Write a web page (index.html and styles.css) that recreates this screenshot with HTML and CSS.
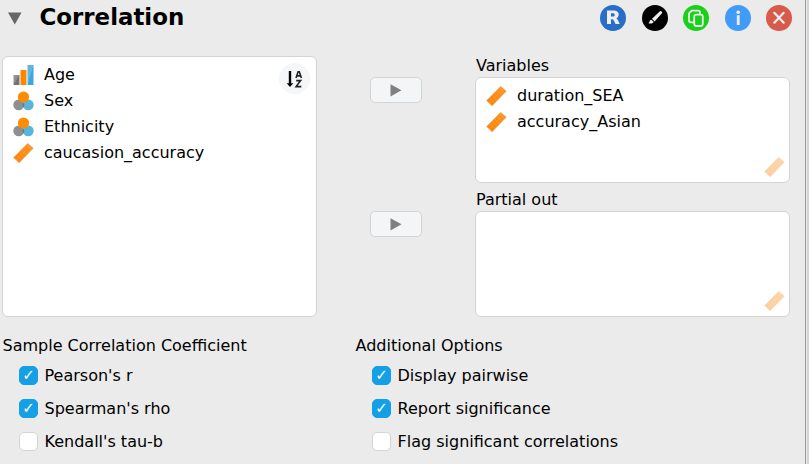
FILE: index.html
```html
<!DOCTYPE html>
<html lang="en">
<head>
<meta charset="utf-8">
<title>Correlation</title>
<link rel="stylesheet" href="styles.css">
</head>
<body>
<svg class="defs" width="0" height="0">
  <defs>
    <linearGradient id="or" x1="0" y1="1" x2="1" y2="0"><stop offset="0" stop-color="#ff7f00"/><stop offset="1" stop-color="#ff9220"/></linearGradient>
    <linearGradient id="gr" x1="0" y1="0" x2="1" y2="1"><stop offset="0" stop-color="#9a9a9a"/><stop offset=".5" stop-color="#8a8a8a"/><stop offset=".5" stop-color="#6d747b"/></linearGradient>
    <linearGradient id="bl" x1="0" y1="0" x2="1" y2="1"><stop offset="0" stop-color="#5eb6e0"/><stop offset=".5" stop-color="#5eb6e0"/><stop offset=".5" stop-color="#3ba6e6"/></linearGradient>
    <symbol id="scale" viewBox="0 0 20 20">
      <path d="M14.2.4 19.7 5.2 5.6 19.7.2 14.6z" fill="url(#or)" stroke="#e5a463" stroke-width=".7"/>
      <path d="M3.2 12l4.8 4.8M5.7 9.5l4.8 4.8M8.2 7l4.8 4.8M10.7 4.5l4.8 4.8M13.2 2l4.8 4.8M2.9 17.1 16.9 3" stroke="#ffb052" stroke-width=".5" fill="none"/>
    </symbol>
    <symbol id="nominal" viewBox="0 0 20 20">
      <circle cx="5.2" cy="13.9" r="5.4" fill="#8e8f91"/>
      <circle cx="14.8" cy="13.9" r="5.4" fill="#5bb4dc"/>
      <path d="M10 11.2a5.4 5.4 0 0 1 0 5.5 5.4 5.4 0 0 1 0-5.5" fill="#477d9f"/>
      <circle cx="10" cy="6" r="5.6" fill="#ff8c00"/>
    </symbol>
    <symbol id="ordinal" viewBox="0 0 20 20">
      <path d="M0 10h6v10H0z" fill="url(#gr)"/><path d="M7 5h6v15H7z" fill="#ff8700"/><path d="M14 0h6v20h-6z" fill="url(#bl)"/>
    </symbol>
  </defs>
</svg>
<div class="window">
<main class="panel">
  <header class="header">
    <svg class="expander" width="14" height="13" viewBox="0 0 14 13"><path d="M0 .5h13.5L6.8 12.5z" fill="#666"/></svg>
    <h1 class="title">Correlation</h1>
    <div class="actions">
      <svg viewBox="0 0 26 26"><circle cx="13" cy="13" r="13" fill="#286dc8"/><path fill-rule="evenodd" d="M7 5.4h6.7c3.5 0 5 1.6 5 4.2 0 1.9-.9 3.1-2.4 3.7.7.4 1.1.9 1.5 1.8l1.9 3.9h-4.2l-1.7-3.5c-.5-1-.9-1.3-1.8-1.3h-1V19H7zm4 2.8v3.4h1.8c1.3 0 1.9-.5 1.9-1.7s-.6-1.7-1.9-1.7z" fill="#eee"/></svg>
      <svg viewBox="0 0 26 26"><circle cx="13" cy="13" r="13" fill="#000"/><path d="M18.2 6 10 13.7l2.6 2.8 7.6-8.6q0-2-2-1.9zM9.3 14.8c-2.3.3-1.2 2.5-2.9 3.4 2.4.8 5 .2 5.2-1.4z" fill="#eee"/></svg>
      <svg viewBox="0 0 26 26"><circle cx="13" cy="13" r="13" fill="#19d119"/><path d="M10.8 17.4H8.2q-2.2 0-2.2-2.2V8.3L8.7 5.6h6.1q2.2 0 2.2 2.2v1.6M11.2 11.8v7q0 2.2 2.2 2.2h4.2q2.2 0 2.2-2.2v-7q0-2.2-2.2-2.2h-4.2q-2.2 0-2.2 2.2z" fill="none" stroke="#eee" stroke-width="1.8"/></svg>
      <svg viewBox="0 0 26 26"><circle cx="13" cy="13" r="13" fill="#419bf9"/><circle cx="13.2" cy="7.2" r="1.8" fill="#eee"/><path d="M11.8 10.2h2.8V20h-2.8z" fill="#eee"/></svg>
      <svg viewBox="0 0 26 26"><circle cx="13" cy="13" r="13" fill="#d85a4a"/><path d="m8.3 7.8 9.4 9.9m0-9.9-9.4 9.9" stroke="#eee" stroke-width="2.2" stroke-linecap="round"/></svg>
    </div>
  </header>

  <section class="assign">
    <div class="box available">
      <ul class="vars">
        <li><svg><use href="#ordinal"/></svg>Age</li>
        <li><svg><use href="#nominal"/></svg>Sex</li>
        <li><svg><use href="#nominal"/></svg>Ethnicity</li>
        <li><svg><use href="#scale"/></svg>caucasion_accuracy</li>
      </ul>
      <div class="sort"><svg width="31" height="31" viewBox="0 0 31 31"><path d="M11 8v13" stroke="#000" stroke-width="2.4"/><path d="M7.7 20.2h6.6L11 24.1z"/><path d="m17 15 2.1-6.3h1.2l2.1 6.3M17.8 12.9h3.8M17.2 17.6h4.4l-4.5 6h5.2" fill="none" stroke="#222" stroke-width="1.6"/></svg></div>
    </div>
    <div class="arrows">
      <button class="move"><svg width="12" height="13" viewBox="0 0 12 13"><path d="M.5.2 11.5 6.3.5 12.4z" fill="#808080"/></svg></button>
      <button class="move"><svg width="12" height="13" viewBox="0 0 12 13"><path d="M.5.2 11.5 6.3.5 12.4z" fill="#808080"/></svg></button>
    </div>
    <div class="targets">
      <h2 class="label">Variables</h2>
      <div class="box target">
        <ul class="vars">
          <li><svg><use href="#scale"/></svg>duration_SEA</li>
          <li><svg><use href="#scale"/></svg>accuracy_Asian</li>
        </ul>
        <svg class="allowed"><use href="#scale"/></svg>
      </div>
      <h2 class="label">Partial out</h2>
      <div class="box target"><svg class="allowed"><use href="#scale"/></svg></div>
    </div>
  </section>

  <section class="options">
    <div class="group">
      <h2 class="label">Sample Correlation Coefficient</h2>
      <div class="option"><span class="check on">✓</span>Pearson's r</div>
      <div class="option"><span class="check on">✓</span>Spearman's rho</div>
      <div class="option"><span class="check"></span>Kendall's tau-b</div>
    </div>
    <div class="group">
      <h2 class="label">Additional Options</h2>
      <div class="option"><span class="check on">✓</span>Display pairwise</div>
      <div class="option"><span class="check on">✓</span>Report significance</div>
      <div class="option"><span class="check"></span>Flag significant correlations</div>
    </div>
  </section>
</main>
<div class="splitter"></div>
</div>
</body>
</html>
```
FILE: styles.css
```css
* { box-sizing: border-box; }
body {
  margin: 0;
  background: #ebebeb;
  color: #000;
  font: 16px/20px "DejaVu Sans", sans-serif;
}
.defs { position: absolute; }
.window { display: flex; height: 464px; overflow: hidden; }
.panel { width: 805px; flex: none; }
.splitter {
  width: 4px;
  border-left: 1px solid #999;
  background: #d3d3d3;
  box-shadow: inset 1px 0 #ebebeb;
}

.header {
  display: flex;
  align-items: center;
  height: 56px;
  padding: 0 13px 21px 8px;
}
.expander { margin-top: 1px; }
.title { margin: 0 0 0 17.5px; font-size: 22.9px; line-height: 35px; }
.actions { display: flex; gap: 15.5px; margin-left: auto; }
.actions svg { display: block; width: 26px; height: 26px; }

.assign { display: flex; height: 261px; padding-left: 2px; }
.box {
  position: relative;
  background: #fff;
  border: 1px solid #d4d4d4;
  border-radius: 6px;
}
.available { width: 315px; }
.vars { list-style: none; margin: 0; padding: 5px 0 0 10px; }
.vars li { display: flex; align-items: center; gap: 10px; height: 26px; }
.vars svg { width: 21px; height: 20px; }
.sort {
  position: absolute;
  top: 6px;
  right: 6px;
  width: 31px;
  height: 31px;
  border-radius: 50%;
  background: #f5f6f8;
}
.sort svg { display: block; }
.arrows {
  display: flex;
  flex-direction: column;
  gap: 108px;
  margin: 21px 53px 0;
}
.move {
  display: flex;
  align-items: center;
  justify-content: center;
  width: 52px;
  height: 26px;
  padding: 0;
  border: 1px solid #d4d4d4;
  border-radius: 5px;
  background: #f4f5f7;
}
.targets { width: 315px; }
.label { margin: 0; font-size: 16px; font-weight: normal; line-height: 20px; }
.targets .label { height: 21px; padding-left: 1px; line-height: 20px; }
.target { height: 106px; }
.targets .box + .label { height: 28px; padding-top: 7px; }
.allowed {
  position: absolute;
  right: 4.5px;
  bottom: 5px;
  width: 21px;
  height: 20px;
  opacity: .4;
}

.options { display: flex; padding: 19px 0 0 2.5px; }
.group { width: 353px; }
.group .label { margin-bottom: 3px; }
.option {
  display: flex;
  align-items: center;
  gap: 6px;
  height: 33px;
  padding-left: 16.5px;
}
.check {
  width: 19px;
  height: 19px;
  margin-right: .5px;
  border: 1px solid #d4d4d4;
  border-radius: 5px;
  background: #fff;
  color: #fff;
  font-size: 15px;
  line-height: 17px;
  text-align: center;
}
.check.on { border-color: #159fe4; background: #159fe4; }
```
